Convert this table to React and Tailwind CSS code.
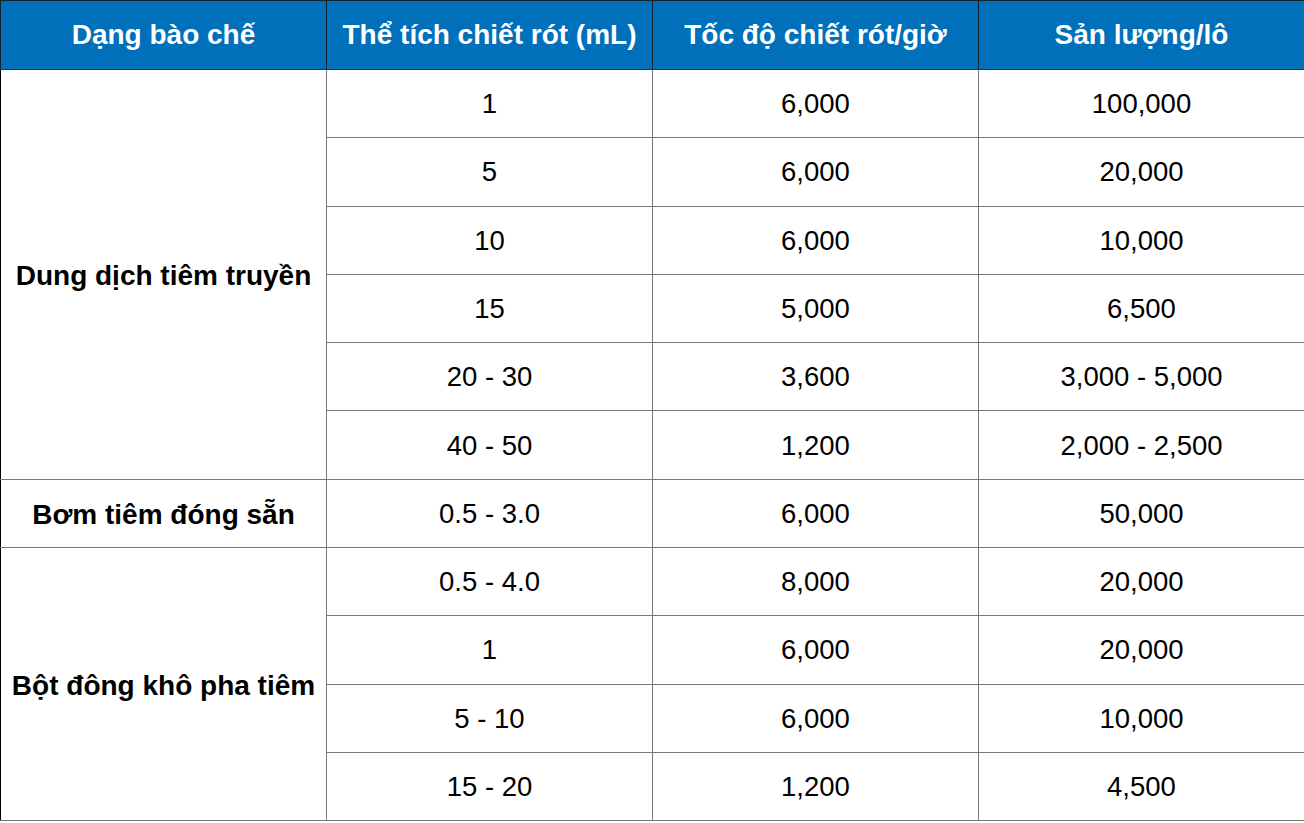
const header = ['Dạng bào chế', 'Thể tích chiết rót (mL)', 'Tốc độ chiết rót/giờ', 'Sản lượng/lô']

const groups = [
  {
    name: 'Dung dịch tiêm truyền',
    rows: [
      ['1', '6,000', '100,000'],
      ['5', '6,000', '20,000'],
      ['10', '6,000', '10,000'],
      ['15', '5,000', '6,500'],
      ['20 - 30', '3,600', '3,000 - 5,000'],
      ['40 - 50', '1,200', '2,000 - 2,500'],
    ],
  },
  {
    name: 'Bơm tiêm đóng sẵn',
    rows: [['0.5 - 3.0', '6,000', '50,000']],
  },
  {
    name: 'Bột đông khô pha tiêm',
    rows: [
      ['0.5 - 4.0', '8,000', '20,000'],
      ['1', '6,000', '20,000'],
      ['5 - 10', '6,000', '10,000'],
      ['15 - 20', '1,200', '4,500'],
    ],
  },
]

export default function App() {
  return (
    <div className="h-[823px] w-[1304px] bg-white" style={{ fontFamily: '"Liberation Sans", Arial, sans-serif' }}>
      <table className="w-[1304px] table-fixed border-collapse border border-black text-[27.5px] text-black">
        <colgroup>
          <col className="w-[326px]" />
          <col className="w-[326px]" />
          <col className="w-[326px]" />
          <col className="w-[326px]" />
        </colgroup>
        <thead>
          <tr className="h-[69px] bg-[#0070bb]">
            {header.map((h) => (
              <th key={h} className="border border-[#14202c] border-b-[#333] p-0 text-center text-[28px] font-bold text-white">
                {h}
              </th>
            ))}
          </tr>
        </thead>
        <tbody>
          {groups.map((g) =>
            g.rows.map((r, i) => (
              <tr key={g.name + i} className="h-[68.3px]">
                {i === 0 && (
                  <td rowSpan={g.rows.length} className="border border-[#777] border-l-black p-0 pt-[3px] text-center text-[28px] font-bold">
                    {g.name}
                  </td>
                )}
                {r.map((c, j) => (
                  <td key={j} className="border border-[#777] p-0 text-center">
                    {c}
                  </td>
                ))}
              </tr>
            ))
          )}
        </tbody>
      </table>
    </div>
  )
}
